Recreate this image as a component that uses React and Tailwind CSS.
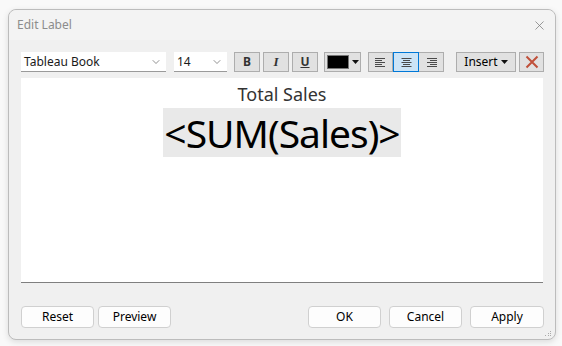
import { ChevronDown, X } from "lucide-react";

const ToolBtn = ({ children, className = "" }) => (
  <div
    className={`flex h-[20px] items-center justify-center border border-[#adadad] bg-[#e1e1e1] ${className}`}
  >
    {children}
  </div>
);

const AlignIcon = ({ kind }) => {
  // five-line glyph, like the win32 toolbar bitmaps
  const rows = [10, 7, 10, 7, 10];
  return (
    <svg width="11" height="9" viewBox="0 0 11 9">
      {rows.map((w, i) => {
        let x1 = 0;
        if (kind === "center") x1 = (11 - w) / 2;
        if (kind === "right") x1 = 11 - w;
        return <rect key={i} x={x1} y={i * 2} width={w} height="1" fill="#4a4a4a" />;
      })}
    </svg>
  );
};

const DlgButton = ({ children, className = "" }) => (
  <button
    className={`flex h-[22px] items-center justify-center rounded-[4px] border border-[#d0d0d0] bg-[#fdfdfd] text-[12px] text-black ${className}`}
  >
    {children}
  </button>
);

export default function App() {
  return (
    <div
      className="h-[346px] w-[562px] bg-[#f9f9f9] pl-[8px] pt-[9px]"
      style={{ fontFamily: '"Noto Sans", "Open Sans", sans-serif' }}
    >
      <div className="flex h-[331px] w-[548px] flex-col rounded-[8px] border border-[#bcbcbc] bg-[#f0f0f0] shadow-[0_2px_6px_rgba(0,0,0,0.12)]">
        {/* title bar */}
        <div className="flex h-[30px] items-center justify-between rounded-t-[8px] bg-[#f3f3f3] pl-[8px] pr-[8px]">
          <span className="text-[12px] text-[#8c8c8c]">Edit Label</span>
          <X className="h-[15px] w-[15px] text-[#7a7a7a]" strokeWidth={1.2} />
        </div>

        {/* toolbar */}
        <div className="mt-[12px] flex h-[20px] items-center pl-[12px]">
          <div className="flex h-[20px] w-[145px] items-center justify-between border-b border-[#9a9a9a] bg-white pl-[3px] pr-[4px]">
            <span className="text-[12px] text-[#1a1a1a]">Tableau Book</span>
            <ChevronDown className="h-[12px] w-[12px] text-[#555]" strokeWidth={1.3} />
          </div>
          <div className="ml-[8px] flex h-[20px] w-[53px] items-center justify-between border-b border-[#9a9a9a] bg-white pl-[3px] pr-[4px]">
            <span className="text-[12px] text-[#1a1a1a]">14</span>
            <ChevronDown className="h-[12px] w-[12px] text-[#555]" strokeWidth={1.3} />
          </div>

          <ToolBtn className="ml-[7px] w-[26px]">
            <span className="text-[12px] font-bold text-[#333]">B</span>
          </ToolBtn>
          <ToolBtn className="ml-[3px] w-[26px]">
            <span className="font-['Liberation_Serif',serif] text-[13px] font-bold italic text-[#333]">I</span>
          </ToolBtn>
          <ToolBtn className="ml-[3px] w-[26px]">
            <span className="text-[12px] font-bold text-[#333] underline">U</span>
          </ToolBtn>

          <ToolBtn className="ml-[6px] w-[37px] justify-start gap-[3px] pl-[2px]">
            <div className="h-[14px] w-[22px] border border-[#777] bg-black" />
            <svg width="7" height="4" viewBox="0 0 7 4">
              <path d="M0 0 L7 0 L3.5 4 Z" fill="#111" />
            </svg>
          </ToolBtn>

          <div className="ml-[7px] flex h-[20px] border border-[#adadad] bg-[#e1e1e1]">
            <div className="flex w-[24px] items-center justify-center border-r border-[#adadad]">
              <AlignIcon kind="left" />
            </div>
            <div className="-my-px flex w-[26px] items-center justify-center border border-[#0078d7] bg-[#cce4f7]">
              <AlignIcon kind="center" />
            </div>
            <div className="flex w-[24px] items-center justify-center">
              <AlignIcon kind="right" />
            </div>
          </div>

          <ToolBtn className="ml-[12px] w-[60px] gap-[3px]">
            <span className="text-[12px] text-black">Insert</span>
            <svg width="7" height="4" viewBox="0 0 7 4">
              <path d="M0 0 L7 0 L3.5 4 Z" fill="#111" />
            </svg>
          </ToolBtn>
          <ToolBtn className="ml-[3px] w-[25px]">
            <svg width="14" height="14" viewBox="0 0 14 14">
              <path d="M1.5 1.5 L12.5 12.5 M12.5 1.5 L1.5 12.5" stroke="#c0503a" strokeWidth="2" />
            </svg>
          </ToolBtn>
        </div>

        {/* label editor */}
        <div className="ml-[12px] mt-[6px] flex h-[205px] w-[522px] flex-col items-center border-b border-[#7f7f7f] bg-white">
          <div className="mt-[5px] text-[18px] leading-[22px] text-[#333]">Total Sales</div>
          <div className="mt-[3px] flex h-[49px] items-center bg-[#e9e9e9] px-[1px] text-[39px] leading-[46px] tracking-[-1px] text-black">
            &lt;SUM(Sales)&gt;
          </div>
        </div>

        {/* buttons */}
        <div className="mt-[23px] flex items-center pl-[12px]">
          <DlgButton className="w-[73px]">Reset</DlgButton>
          <DlgButton className="ml-[4px] w-[73px]">Preview</DlgButton>
          <DlgButton className="ml-[137px] w-[73px]">OK</DlgButton>
          <DlgButton className="ml-[8px] w-[73px]">Cancel</DlgButton>
          <DlgButton className="ml-[8px] w-[74px]">Apply</DlgButton>
        </div>

        {/* resize grip */}
        <div className="ml-auto mr-[3px] mt-auto mb-[3px] grid w-[7px] grid-cols-3 gap-[1px]">
          <span />
          <span />
          <span className="h-[1px] w-[1px] bg-[#aaa]" />
          <span />
          <span className="h-[1px] w-[1px] bg-[#aaa]" />
          <span className="h-[1px] w-[1px] bg-[#aaa]" />
          <span className="h-[1px] w-[1px] bg-[#aaa]" />
          <span className="h-[1px] w-[1px] bg-[#aaa]" />
          <span className="h-[1px] w-[1px] bg-[#aaa]" />
        </div>
      </div>
    </div>
  );
}
